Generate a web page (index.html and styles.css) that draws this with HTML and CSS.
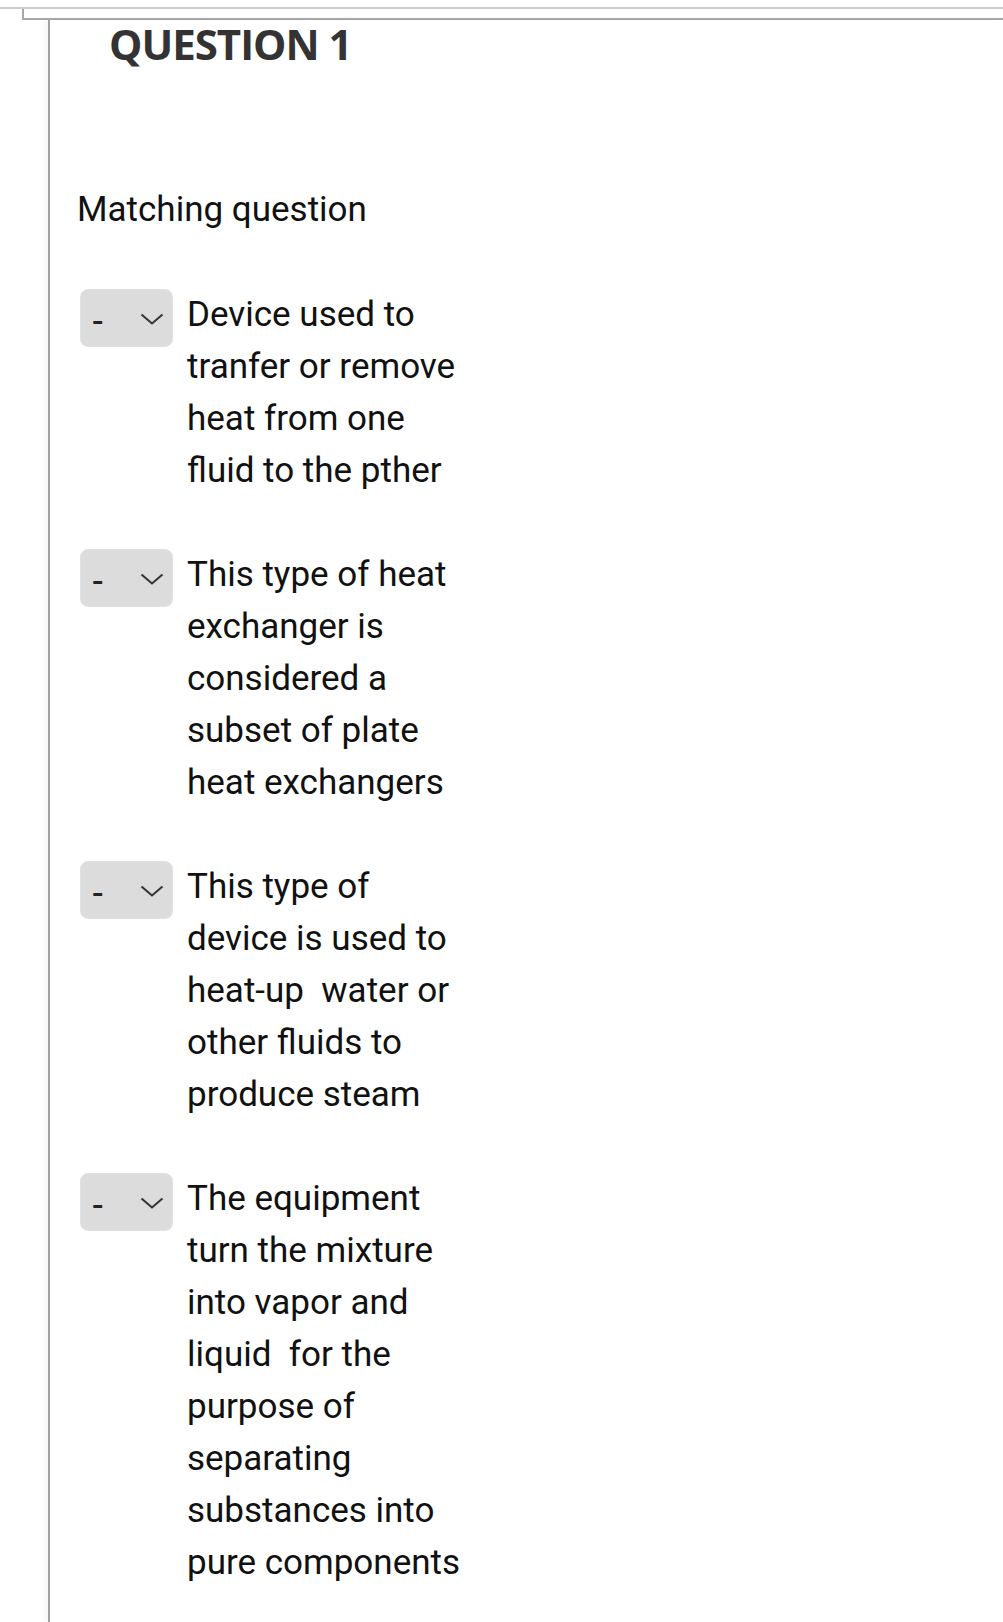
FILE: index.html
```html
<!DOCTYPE html>
<html>
<head>
<meta charset="utf-8">
<link rel="stylesheet" href="styles.css">
</head>
<body>
<div class="topline"></div>
<div class="tick"></div>
<div class="panel">
  <h2 class="qtitle">QUESTION 1</h2>
  <p class="qtype">Matching question</p>
  <div class="rows">
    <div class="row">
      <div class="select"><span class="dash">-</span><svg class="chev" width="24" height="12" viewBox="0 0 24 12"><polyline points="1.5,1.5 12,10.5 22.5,1.5" fill="none" stroke="#333" stroke-width="2"/></svg></div>
      <div class="prompt">Device used to<br>tranfer or remove<br>heat from one<br>fluid to the pther</div>
    </div>
    <div class="row">
      <div class="select"><span class="dash">-</span><svg class="chev" width="24" height="12" viewBox="0 0 24 12"><polyline points="1.5,1.5 12,10.5 22.5,1.5" fill="none" stroke="#333" stroke-width="2"/></svg></div>
      <div class="prompt">This type of heat<br>exchanger is<br>considered a<br>subset of plate<br>heat exchangers</div>
    </div>
    <div class="row">
      <div class="select"><span class="dash">-</span><svg class="chev" width="24" height="12" viewBox="0 0 24 12"><polyline points="1.5,1.5 12,10.5 22.5,1.5" fill="none" stroke="#333" stroke-width="2"/></svg></div>
      <div class="prompt">This type of<br>device is used to<br>heat-up &nbsp;water or<br>other fluids to<br>produce steam</div>
    </div>
    <div class="row">
      <div class="select"><span class="dash">-</span><svg class="chev" width="24" height="12" viewBox="0 0 24 12"><polyline points="1.5,1.5 12,10.5 22.5,1.5" fill="none" stroke="#333" stroke-width="2"/></svg></div>
      <div class="prompt">The equipment<br>turn the mixture<br>into vapor and<br>liquid &nbsp;for the<br>purpose of<br>separating<br>substances into<br>pure components</div>
    </div>
  </div>
</div>
</body>
</html>
```
FILE: styles.css
```css
html, body {
  margin: 0;
  padding: 0;
  background: #ffffff;
}
body {
  height: 1622px;
  overflow: hidden;
  font-family: Roboto, "Liberation Sans", sans-serif;
  color: #111;
}
.topline {
  margin-top: 7px;
  height: 2px;
  background: #cccccc;
}
.tick {
  margin-left: 22px;
  height: 9px;
  border-left: 2px solid #a8a8a8;
  border-bottom: 2px solid #a8a8a8;
}
.panel {
  margin-left: 48px;
  border-left: 2px solid #a0a0a0;
  height: 1602px;
  box-shadow: -3px 0 6px rgba(0, 0, 0, 0.04);
}
.qtitle {
  margin: 0;
  padding-top: 4px;
  padding-left: 59px;
  font-family: "Open Sans", "Liberation Sans", sans-serif;
  font-weight: 700;
  font-size: 42px;
  line-height: 40px;
  letter-spacing: -1px;
  color: #333333;
}
.qtype {
  margin: 120px 0 0 0;
  padding-left: 27px;
  font-size: 35px;
  line-height: 52px;
}
.rows {
  margin-top: 53px;
  padding-left: 30px;
  display: flex;
  flex-direction: column;
  gap: 52px;
}
.row {
  display: flex;
  align-items: flex-start;
}
.select {
  flex: none;
  position: relative;
  width: 93px;
  height: 58px;
  box-sizing: border-box;
  background: #dcdcdc;
  border: 1px solid #e2e2e2;
  border-radius: 8px;
  margin-right: 14px;
}
.dash {
  position: absolute;
  left: 11px;
  top: 11px;
  font-size: 34px;
  line-height: 40px;
  font-weight: 500;
  color: #222;
}
.chev {
  position: absolute;
  left: 59px;
  top: 23px;
}
.prompt {
  font-size: 35px;
  line-height: 52px;
  color: #111;
}
```
